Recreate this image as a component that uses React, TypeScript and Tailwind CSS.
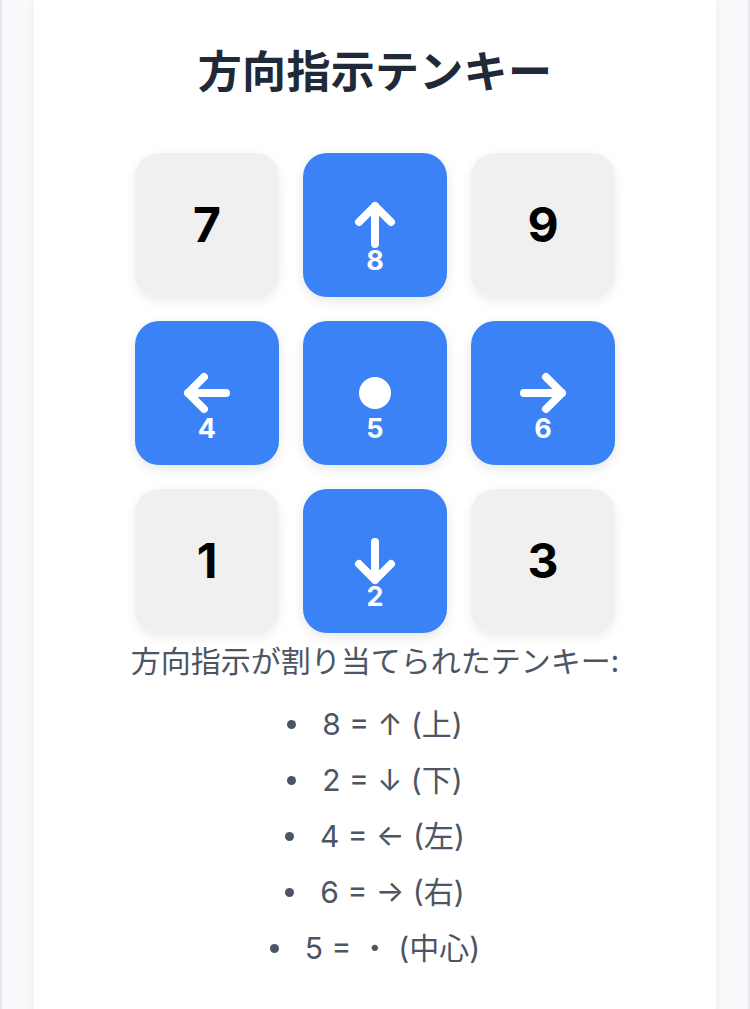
import React from "react";

const LATIN = { fontFamily: 'Inter, "Noto Sans CJK JP", sans-serif' };
const JP = { fontFamily: '"Noto Sans CJK JP", Inter, sans-serif' };

function Arrow({ d }: { d: string }) {
  return (
    <svg width="56" height="56" viewBox="0 0 56 56" fill="none" stroke="white" strokeWidth="8" strokeLinecap="round" strokeLinejoin="round">
      <path d={d} />
    </svg>
  );
}

type KeyDef =
  | { kind: "num"; label: string }
  | { kind: "dir"; label: string; d?: string; dot?: boolean };

const keys: KeyDef[] = [
  { kind: "num", label: "7" },
  { kind: "dir", label: "8", d: "M28 47V9M12 25L28 9L44 25" },
  { kind: "num", label: "9" },
  { kind: "dir", label: "4", d: "M47 28H9M25 12L9 28L25 44" },
  { kind: "dir", label: "5", dot: true },
  { kind: "dir", label: "6", d: "M9 28H47M31 12L47 28L31 44" },
  { kind: "num", label: "1" },
  { kind: "dir", label: "2", d: "M28 9V47M12 31L28 47L44 31" },
  { kind: "num", label: "3" },
];

function Key({ k }: { k: KeyDef }) {
  if (k.kind === "num") {
    return (
      <div
        className="w-[144px] h-[144px] rounded-[24px] bg-[#f0f0f0] shadow-[0_4px_12px_rgba(0,0,0,0.08)] flex items-center justify-center text-[48px] font-bold text-black leading-none"
        style={LATIN}
      >
        {k.label}
      </div>
    );
  }
  return (
    <div className="relative w-[144px] h-[144px] rounded-[24px] bg-[#3b82f6] shadow-[0_4px_12px_rgba(0,0,0,0.1)] flex items-center justify-center">
      {k.dot ? <div className="w-8 h-8 rounded-full bg-white" /> : <Arrow d={k.d!} />}
      <span
        className="absolute left-0 right-0 top-[94px] text-center text-[27px] font-bold leading-none text-white"
        style={LATIN}
      >
        {k.label}
      </span>
    </div>
  );
}

const items = ["8 = ↑ (上)", "2 = ↓ (下)", "4 = ← (左)", "6 = → (右)", "5 = ・ (中心)"];

export default function App() {
  return (
    <div className="min-h-screen bg-[#f8f9fa] border-x-2 border-[#e5e7eb] flex justify-center px-8">
      <div className="w-full bg-white shadow-[0_0_8px_rgba(0,0,0,0.06)] flex flex-col items-center pt-[47px] pb-10">
        <h1 className="text-[44px] font-bold leading-none text-[#1f2937] tracking-[0.3px]" style={JP}>
          方向指示テンキー
        </h1>
        <div className="mt-[62px] grid grid-cols-3 gap-6">
          {keys.map((k, i) => (
            <Key key={i} k={k} />
          ))}
        </div>
        <p className="mt-[4px] text-[30px] leading-[45px] text-[#4b5563]" style={JP}>
          方向指示が割り当てられたテンキー:
        </p>
        <ul className="mt-[14px] flex flex-col items-center text-[30px] leading-[56px] text-[#4b5563]" style={LATIN}>
          {items.map((t) => (
            <li key={t} className="flex items-center">
              <span className="w-[9px] h-[9px] rounded-full bg-[#4b5563] mr-[26px]" />
              <span>{t}</span>
            </li>
          ))}
        </ul>
      </div>
    </div>
  );
}
